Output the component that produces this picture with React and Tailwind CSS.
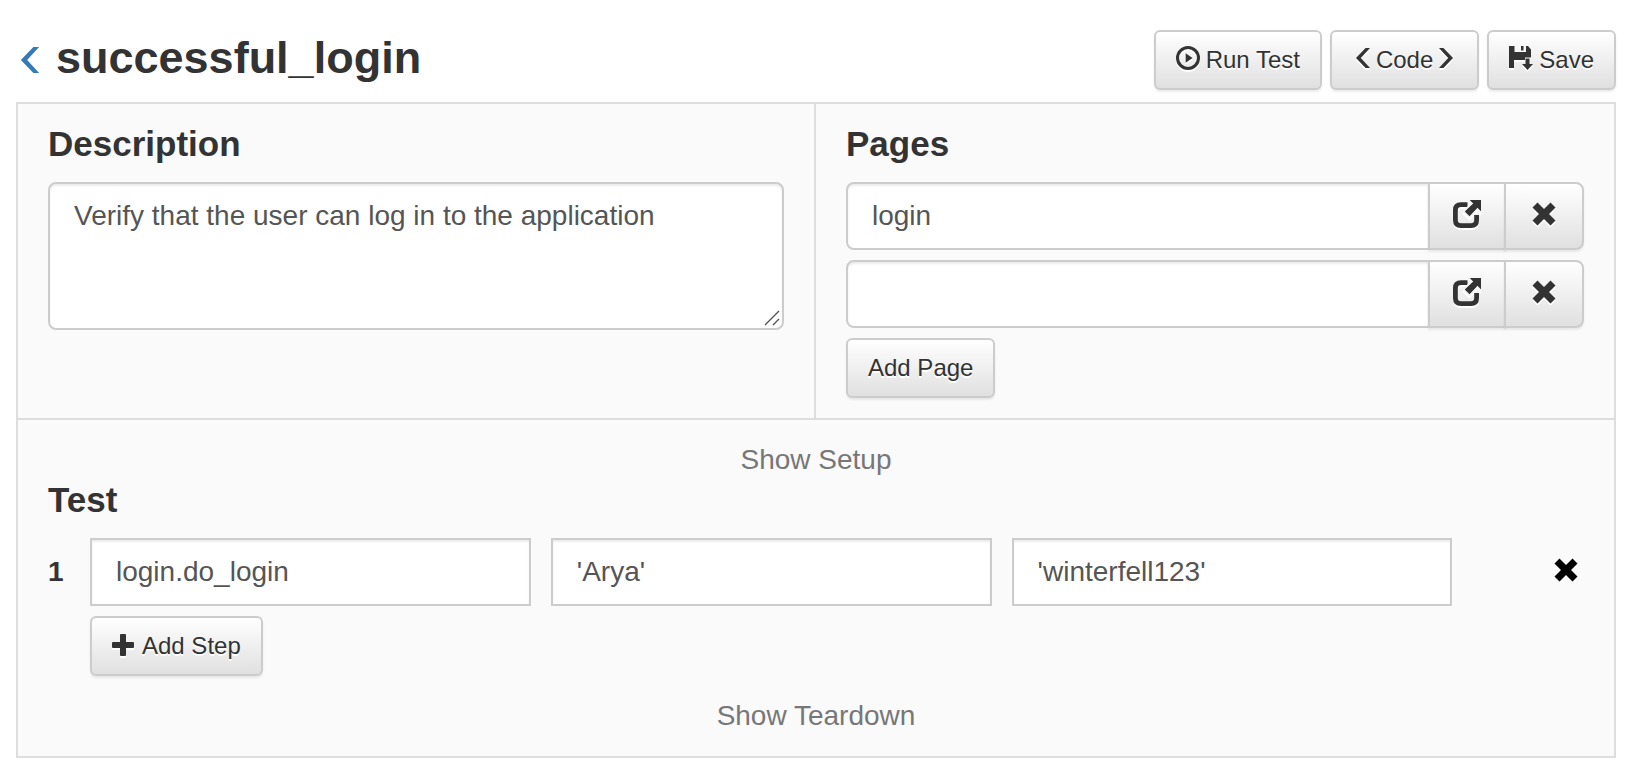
const buttonLook =
  "border-2 border-[#ccc] bg-linear-to-b from-white to-[#e0e0e0] text-[#333] cursor-pointer [text-shadow:0_2px_0_#fff] shadow-[inset_0_2px_0_rgba(255,255,255,.15),0_2px_2px_rgba(0,0,0,.075)]";

const fieldLook =
  "h-17 min-w-0 border-2 border-[#ccc] bg-white px-6 text-[28px] text-[#555] shadow-[inset_0_2px_2px_rgba(0,0,0,.075)] outline-none";

const iconShadow = "drop-shadow-[0_2px_0_#fff]";

function Button({ children }) {
  return (
    <button type="button" className={`flex h-15 items-center gap-1.5 rounded-md px-5 text-2xl ${buttonLook}`}>
      {children}
    </button>
  );
}

function ChevronLeft({ className }) {
  return (
    <svg viewBox="0 0 14 20" fill="currentColor" aria-hidden="true" className={className}>
      <path d="M9.6 0H14L4.8 10L14 20H9.6L0 10Z" />
    </svg>
  );
}

function PlayCircle() {
  return (
    <svg viewBox="0 0 24 24" aria-hidden="true" className={`-mt-1 size-6 ${iconShadow}`}>
      <circle cx="12" cy="12" r="10.5" fill="none" stroke="currentColor" strokeWidth="3" />
      <path d="M9.7 7.2L16.5 12L9.7 16.8Z" fill="currentColor" />
    </svg>
  );
}

function FloppySave() {
  return (
    <svg viewBox="0 0 24 24" fill="currentColor" aria-hidden="true" className={`-mt-1 size-6 ${iconShadow}`}>
      <path d="M0 0H5.500V6H17V0H19L22 3.500V11.500H16V14H5V22H0Z" />
      <path d="M12 0H14.500V4.500H12Z" />
      <path d="M16.500 12.500H20.500V18H24L18.500 24L13 18H16.500Z" />
    </svg>
  );
}

function OpenWindow() {
  return (
    <svg viewBox="0 0 28 28" aria-hidden="true" className={`size-7 ${iconShadow}`}>
      <path d="M14.500 4.600H8Q2.400 4.600 2.400 10V20Q2.400 25.600 8 25.600H18Q23.600 25.600 23.600 20V15" fill="none" stroke="currentColor" strokeWidth="4.800" />
      <path d="M17 0H28V11L24.500 7.500L16.500 16L12 11.500L20.500 3.500Z" fill="currentColor" stroke="#f3f3f3" strokeWidth="4" paintOrder="stroke" />
      <path d="M17 0H28V11L24.500 7.500L16.500 16L12 11.500L20.500 3.500Z" fill="currentColor" />
    </svg>
  );
}

function Cross({ className }) {
  return (
    <svg viewBox="0 0 24 24" fill="currentColor" aria-hidden="true" className={className}>
      <path d="M5.500 0.500L12 7L18.500 0.500L23.500 5.500L17 12L23.500 18.500L18.500 23.500L12 17L5.500 23.500L0.500 18.500L7 12L0.500 5.500Z" />
    </svg>
  );
}

function Plus() {
  return (
    <svg viewBox="0 0 24 24" fill="currentColor" aria-hidden="true" className={`size-6 ${iconShadow}`}>
      <path d="M9 0H13Q14 0 14 1V8H21Q22 8 22 9V13Q22 14 21 14H14V21Q14 22 13 22H9Q8 22 8 21V14H1Q0 14 0 13V9Q0 8 1 8H8V1Q8 0 9 0Z" />
    </svg>
  );
}

function ResizeGrip() {
  return (
    <svg
      viewBox="0 0 16 16"
      fill="none"
      stroke="#555"
      strokeWidth="1.4"
      aria-hidden="true"
      className="pointer-events-none absolute bottom-1 right-1 size-4"
    >
      <path d="M1 15L15 1M9 15L15 9" />
    </svg>
  );
}

function PageRow({ value, index }) {
  return (
    <div className="flex">
      <input
        type="text"
        aria-label={`Page ${index}`}
        defaultValue={value}
        className={`flex-1 rounded-l-lg ${fieldLook}`}
      />
      <button type="button" aria-label="Open page" className={`-ml-0.5 flex w-[78px] items-center justify-center pb-1 ${buttonLook}`}>
        <OpenWindow />
      </button>
      <button type="button" aria-label="Remove page" className={`-ml-0.5 flex w-20 items-center justify-center rounded-r-lg pb-1 ${buttonLook}`}>
        <Cross className={`size-6 ${iconShadow}`} />
      </button>
    </div>
  );
}

const pages = ["login", ""];
const step = ["login.do_login", "'Arya'", "'winterfell123'"];
const stepLabels = ["Action", "First argument", "Second argument"];

export default function App() {
  return (
    <div className="min-h-screen bg-white pb-5 pl-4 pr-4.5 pt-7.5 font-['Liberation_Sans',Arial,sans-serif] text-[28px] leading-10 text-[#333]">
      <header className="flex items-start justify-between pb-3">
        <div className="flex items-center gap-4 pl-1">
          <a href="#tests" aria-label="Back to tests" className="pt-1 text-[#337ab7]">
            <ChevronLeft className="h-6.5 w-5" />
          </a>
          <h1 className="text-[45px] font-bold leading-14">successful_login</h1>
        </div>
        <div className="flex gap-2">
          <Button>
            <PlayCircle />
            Run Test
          </Button>
          <Button>
            <ChevronLeft className={`-mt-1 ml-1 h-5 w-3.5 ${iconShadow}`} />
            Code
            <ChevronLeft className="-mt-1 mr-1 h-5 w-3.5 rotate-180 drop-shadow-[0_-2px_0_#fff]" />
          </Button>
          <Button>
            <FloppySave />
            Save
          </Button>
        </div>
      </header>

      <main className="border-2 border-[#ddd] bg-[#fafafa]">
        <div className="grid grid-cols-2 border-b-2 border-[#ddd]">
          <section className="border-r-2 border-[#ddd] px-7.5 pb-5 pt-5">
            <h2 className="mb-4.5 text-[35px] font-bold">
              <label htmlFor="description">Description</label>
            </h2>
            <div className="relative">
              <textarea
                id="description"
                defaultValue="Verify that the user can log in to the application"
                className="block h-37 w-full resize-none rounded-lg border-2 border-[#ccc] bg-white px-6 py-3 text-[28px] leading-10 text-[#555] shadow-[inset_0_2px_2px_rgba(0,0,0,.075)] outline-none"
              />
              <ResizeGrip />
            </div>
          </section>
          <section className="px-7.5 pb-5 pt-5">
            <h2 className="mb-4.5 text-[35px] font-bold">Pages</h2>
            <div className="flex flex-col items-stretch gap-2.5">
              {pages.map((page, i) => (
                <PageRow key={i} value={page} index={i + 1} />
              ))}
              <div className="flex">
                <Button>Add Page</Button>
              </div>
            </div>
          </section>
        </div>

        <section className="px-7.5 pb-5 pt-5">
          <div className="flex justify-center">
            <a href="#setup" className="text-[#777]">Show Setup</a>
          </div>
          <h2 className="mb-4.5 text-[35px] font-bold">Test</h2>
          <div className="flex items-center">
            <span className="w-10.5 font-bold">1</span>
            {step.map((value, i) => (
              <div key={i} className="flex w-[30%] pr-5">
                <input type="text" aria-label={stepLabels[i]} defaultValue={value} className={`flex-1 ${fieldLook}`} />
              </div>
            ))}
            <button type="button" aria-label="Remove step" className="ml-auto mr-1.5 cursor-pointer pb-1 text-black">
              <Cross className="size-6" />
            </button>
          </div>
          <div className="mb-5 ml-10.5 mt-2.5 flex">
            <Button>
              <Plus />
              Add Step
            </Button>
          </div>
          <div className="flex justify-center">
            <a href="#teardown" className="text-[#777]">Show Teardown</a>
          </div>
        </section>
      </main>
    </div>
  );
}
